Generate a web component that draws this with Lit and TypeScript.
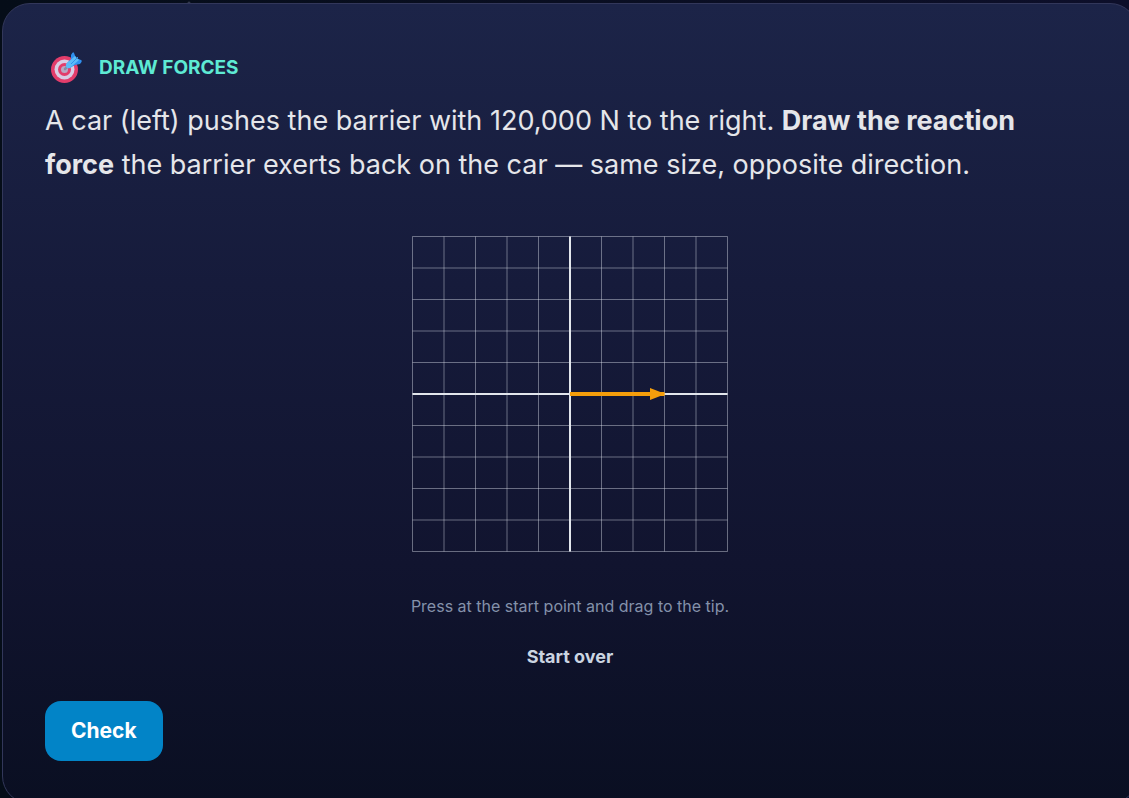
import { LitElement, html, css, svg } from "lit";
import { customElement, property, state } from "lit/decorators.js";

const STEP = 63;
const EDGE = 1;
const CELLS = 10;
const at = (n: number) => EDGE + n * STEP;

interface Force {
  x1: number;
  y1: number;
  x2: number;
  y2: number;
}

@customElement("force-grid")
export class ForceGrid extends LitElement {
  static styles = css`
    :host {
      display: block;
    }
    .grid {
      display: block;
      width: 316px;
      height: auto;
      cursor: crosshair;
      touch-action: none;
      overflow: visible;
    }
    .line {
      stroke: #e2e8f0;
      stroke-opacity: 0.42;
      stroke-width: 2;
    }
    .axis {
      stroke: #e2e6ec;
      stroke-width: 4;
    }
    .force {
      stroke: #f59e0b;
      stroke-width: 8;
    }
    .head {
      fill: #f59e0b;
    }
    .drawn {
      stroke: #38bdf8;
    }
    .drawn-head {
      fill: #38bdf8;
    }
  `;

  @property({ attribute: false }) given: Force = { x1: 5, y1: 5, x2: 8, y2: 5 };
  @state() private drawn: Force | null = null;
  private dragging = false;

  clear() {
    this.drawn = null;
  }

  private point(e: PointerEvent) {
    const box = (e.currentTarget as SVGElement).getBoundingClientRect();
    const snap = (v: number) => Math.max(0, Math.min(CELLS, Math.round(v * CELLS)));
    return {
      x: snap((e.clientX - box.left) / box.width),
      y: snap((e.clientY - box.top) / box.height),
    };
  }

  private start(e: PointerEvent) {
    const p = this.point(e);
    this.dragging = true;
    this.drawn = { x1: p.x, y1: p.y, x2: p.x, y2: p.y };
  }

  private move(e: PointerEvent) {
    if (!this.dragging || !this.drawn) return;
    const p = this.point(e);
    this.drawn = { ...this.drawn, x2: p.x, y2: p.y };
  }

  private end() {
    this.dragging = false;
  }

  private arrow(f: Force, line: string, head: string) {
    const dx = at(f.x2) - at(f.x1);
    const dy = at(f.y2) - at(f.y1);
    const length = Math.hypot(dx, dy);
    if (!length) return null;
    const angle = (Math.atan2(dy, dx) * 180) / Math.PI;
    return svg`<g transform="translate(${at(f.x1)} ${at(f.y1)}) rotate(${angle})">
      <line class="force ${line}" x1="0" y1="0" x2="${length}" y2="0"></line>
      <path class="head ${head}" d="M${length - 29} -12 L${length + 2} 0 L${length - 29} 12 Z"></path>
    </g>`;
  }

  render() {
    const ticks = Array.from({ length: CELLS + 1 }, (_, i) => i);
    return html`<svg
      class="grid"
      viewBox="0 0 632 632"
      role="img"
      aria-label="Force grid"
      @pointerdown=${this.start}
      @pointermove=${this.move}
      @pointerup=${this.end}
      @pointerleave=${this.end}
    >
      ${ticks.map(
        (i) => svg`<line class="line" x1="${at(i)}" y1="${EDGE}" x2="${at(i)}" y2="${at(CELLS)}"></line>
          <line class="line" x1="${EDGE}" y1="${at(i)}" x2="${at(CELLS)}" y2="${at(i)}"></line>`
      )}
      <line class="axis" x1="${at(5)}" y1="${EDGE}" x2="${at(5)}" y2="${at(CELLS)}"></line>
      <line class="axis" x1="${EDGE}" y1="${at(5)}" x2="${at(CELLS)}" y2="${at(5)}"></line>
      ${this.arrow(this.given, "", "")}
      ${this.drawn ? this.arrow(this.drawn, "drawn", "drawn-head") : null}
    </svg>`;
  }
}

@customElement("app-root")
export class AppRoot extends LitElement {
  static styles = css`
    :host {
      display: block;
      box-sizing: border-box;
      height: 100vh;
      overflow: hidden;
      padding: 3px 0 0 2px;
      background:
        radial-gradient(circle at 189px 3px, #4a5068 0, transparent 2px),
        linear-gradient(90deg, #050d18, #0d0f2a);
      font-family: Inter, "Liberation Sans", sans-serif;
      color: #e5e6ea;
    }
    .card {
      box-sizing: border-box;
      display: flex;
      flex-direction: column;
      margin-right: -9px;
      padding: 42px;
      border: 1px solid #32375a;
      border-radius: 28px;
      background: linear-gradient(180deg, #1c2448 0%, #161b3b 35%, #11142f 70%, #0a0f22 100%);
    }
    .kicker {
      display: flex;
      align-items: center;
      gap: 16px;
      height: 44px;
      margin: 0;
      font-size: 19px;
      line-height: 28px;
      font-weight: 700;
      color: #5eead4;
      text-transform: uppercase;
    }
    .target {
      width: 32px;
      height: 32px;
      margin-left: 6px;
    }
    .prompt {
      margin: 9px 0 0;
      padding-right: 16px;
      font-size: 27px;
      line-height: 44px;
      font-weight: 400;
    }
    .prompt strong {
      font-weight: 700;
    }
    .board {
      display: flex;
      flex-direction: column;
      align-items: center;
      margin-top: 49px;
    }
    .hint {
      margin: 42px 0 0;
      font-size: 16px;
      line-height: 24px;
      color: #8491aa;
    }
    button {
      border: 0;
      font-family: inherit;
      font-weight: 700;
      cursor: pointer;
    }
    .reset {
      margin-top: 16px;
      padding: 8px 16px;
      background: none;
      color: #cbd5e1;
      font-size: 18px;
      line-height: 30px;
    }
    .check {
      align-self: flex-start;
      margin-top: 21px;
      padding: 14px 26px;
      border-radius: 16px;
      background: #0284c7;
      color: #ffffff;
      font-size: 21px;
      line-height: 32px;
    }
  `;

  private reset() {
    this.renderRoot.querySelector<ForceGrid>("force-grid")?.clear();
  }

  render() {
    return html`<main class="card">
      <h1 class="kicker">
        <svg class="target" viewBox="0 0 32 32" aria-hidden="true">
          <circle cx="13.5" cy="17.5" r="13.5" fill="#e33d6b"></circle>
          <circle cx="13.5" cy="17.5" r="10" fill="#d9cde4"></circle>
          <circle cx="13.5" cy="17.5" r="6.5" fill="#e33d6b"></circle>
          <circle cx="13.5" cy="17.5" r="3.5" fill="#b9a9c4"></circle>
          <path d="M14 17 L20 11" stroke="#858da8" stroke-width="2.5" stroke-linecap="round"></path>
          <path d="M16 11 L20 7 L20 3 Q22 -1 23 1 L25 6 L30 8 Q32 9 29 12 L24 13 L19 16 Q15 17 16 11 Z" fill="#2f8fee"></path>
          <path d="M15 12 L24 4 L28 8 L19 16 Q14 17 15 12 Z" fill="#5bbcf8"></path>
          <path d="M20 12 L27 5" stroke="#2f8fee" stroke-width="1"></path>
        </svg>
        Draw forces
      </h1>
      <p class="prompt">
        A car (left) pushes the barrier with 120,000 N to the right.
        <strong>Draw the reaction force</strong> the barrier exerts back on the car — same size, opposite direction.
      </p>
      <section class="board">
        <force-grid></force-grid>
        <p class="hint">Press at the start point and drag to the tip.</p>
        <button class="reset" type="button" @click=${this.reset}>Start over</button>
      </section>
      <button class="check" type="button">Check</button>
    </main>`;
  }
}
